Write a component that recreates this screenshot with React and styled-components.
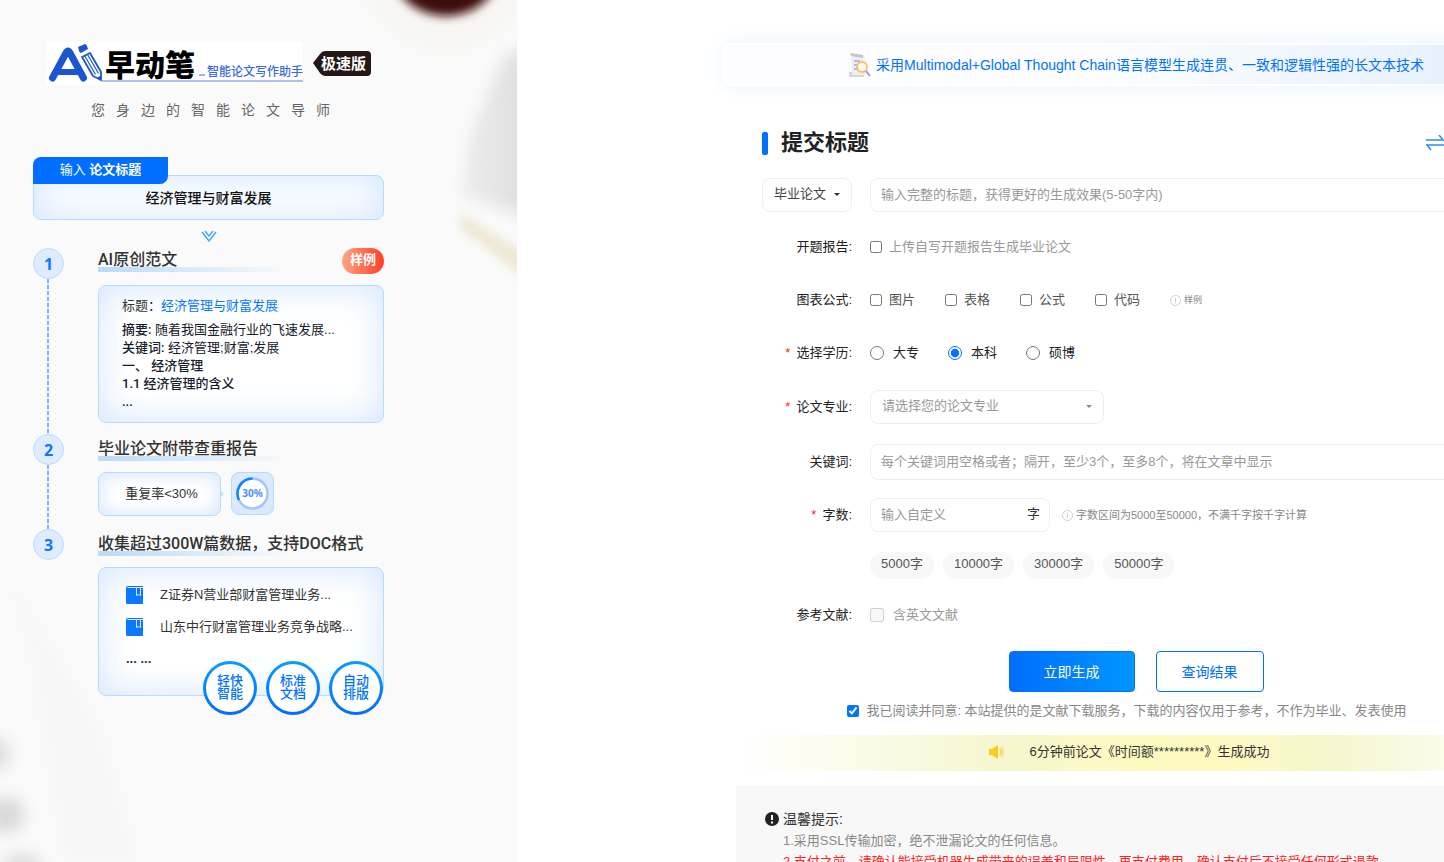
import { useState } from "react";
import styled, { createGlobalStyle, css } from "styled-components";

const GlobalStyle = createGlobalStyle`
    * {
        box-sizing: border-box;
    }

    body {
        margin: 0;
        background: #fff;
        color: #333;
        font-family: "Liberation Sans", "Noto Sans CJK SC", sans-serif;
        font-size: 13px;
        line-height: 18px;
    }

    button, input, select {
        font: inherit;
        color: inherit;
    }

    h1, h2, p, ul, ol {
        margin: 0;
        padding: 0;
    }

    ul, ol {
        list-style: none;
    }
`;

const Page = styled.div`
    display: flex;
    height: 100vh;
    overflow: hidden;
`;

const Aside = styled.aside`
    position: relative;
    flex: 0 1 517px;
    padding: 42px 133px 0 33px;
    background: #fafafa;
    overflow: hidden;
`;

const Backdrop = styled.svg`
    position: absolute;
    top: 0;
    left: 0;
`;

const AsideBody = styled.div`
    position: relative;
`;

const Brand = styled.div`
    display: flex;
    align-items: center;
    gap: 10px;
    padding-left: 13px;
`;

const Slogan = styled.p`
    margin: 15px 0 0 58px;
    font-size: 14px;
    line-height: 20px;
    letter-spacing: 11px;
    white-space: nowrap;
    color: #666;
`;

const panel = css`
    border: 1px solid #b3dcff;
    border-radius: 8px;
    background: #fff;
    box-shadow: inset 0 0 36px #d0e4ff;
`;

const TitleBox = styled.div`
    margin-top: 37px;

    .tag {
        position: relative;
        z-index: 1;
        width: 135px;
        height: 27px;
        line-height: 26px;
        border-radius: 8px 0 8px 0;
        background: #006eff;
        color: #fff;
        text-align: center;
    }

    .value {
        ${panel}
        margin-top: -9px;
        height: 45px;
        line-height: 44px;
        font-size: 14px;
        font-weight: 500;
        text-align: center;
        color: #111;
    }
`;

const Arrow = styled.svg`
    display: block;
    margin: 11px auto 6px;
`;

const Steps = styled.ol`
    display: flex;
    flex-direction: column;
`;

const Step = styled.li`
    display: grid;
    grid-template-columns: 31px 1fr;
    column-gap: 34px;
    padding-bottom: ${({ $gap }) => $gap || 0}px;
    position: relative;

    &:not(:last-child)::before {
        content: "";
        position: absolute;
        top: 31px;
        bottom: 0;
        left: 14px;
        width: 2px;
        background: repeating-linear-gradient(#7db5ff 0 4px, #dcebff 4px 6px);
    }
`;

const StepNumber = styled.span`
    width: 31px;
    height: 31px;
    line-height: 30px;
    border: 1px solid #b3dcff;
    border-radius: 50%;
    background: #dfecff;
    color: #0a78ff;
    font-family: "Noto Sans", sans-serif;
    font-size: 16px;
    font-weight: 700;
    text-align: center;
`;

const StepHead = styled.div`
    display: flex;
    justify-content: space-between;
    align-items: flex-start;
    padding-top: ${({ $top }) => $top || 0}px;

    h2 {
        flex: 1;
        height: 24px;
        padding-top: 1px;
        font-family: Roboto, "Noto Sans CJK SC", sans-serif;
        font-size: 16px;
        font-weight: 500;
        line-height: 22px;
        white-space: nowrap;
        background: linear-gradient(90deg, #b8dbf9, #fafafa) 0 100% / 194px 5px no-repeat;
    }
`;

const SampleButton = styled.button`
    width: 42px;
    height: 26px;
    padding: 0 0 3px;
    border: 0;
    border-radius: 13px;
    background: linear-gradient(90deg, #ffa584, #ff3d25);
    color: #fff;
    font-weight: 700;
    cursor: pointer;
`;

const Outline = styled.div`
    ${panel}
    height: 138px;
    margin-top: 11px;
    padding: 11px 23px;
    color: #16202c;

    p {
        white-space: nowrap;
    }

    p:first-child {
        margin-bottom: 6px;
        color: #333;
    }

    a {
        color: #0a78ff;
        text-decoration: none;
    }

    b {
        font-family: Roboto, "Noto Sans CJK SC", sans-serif;
        font-weight: 500;
    }
`;

const Rates = styled.div`
    display: flex;
    gap: 10px;
    margin-top: 11px;

    div {
        ${panel}
        width: 123px;
        height: 44px;
        line-height: 42px;
        text-align: center;
        box-shadow: inset 0 0 20px #d0e4ff;
    }

    .rate {
        position: relative;
        padding-left: 4px;
    }

    /* small pointer towards the ring */
    .rate::after {
        content: "";
        position: absolute;
        top: 18px;
        right: -4px;
        border: 3px solid transparent;
        border-left-color: #c5e2ff;
        border-right: 0;
    }

    .ring {
        width: 43px;
        height: 43px;
        background: #e3efff;
    }

    svg {
        display: block;
        margin: 4px;
    }
`;

const Papers = styled.div`
    ${panel}
    position: relative;
    height: 129px;
    margin-top: 11px;
    padding: 18px 27px;

    li {
        display: flex;
        align-items: center;
        gap: 17px;
        margin-bottom: 14px;
        white-space: nowrap;
    }
`;

const Badges = styled.ul`
    position: absolute;
    right: 0;
    bottom: -20px;
    display: flex;
    gap: 9px;

    && li {
        width: 54px;
        height: 54px;
        margin: 0;
        padding-bottom: 2px;
        justify-content: center;
        border: 3px solid transparent;
        border-radius: 50%;
        background: linear-gradient(#fff, #fff) padding-box, linear-gradient(#0a9bff, #006eff) border-box;
        color: #0072ff;
        font-weight: 500;
        line-height: 13px;
        white-space: pre;
    }
`;

const Main = styled.main`
    flex: 1 1 0;
    min-width: 0;
    padding: 43px 0 0 206px;
    overflow: hidden;
`;

const Content = styled.div`
    min-width: 826px;
`;

const Banner = styled.div`
    display: flex;
    justify-content: center;
    align-items: center;
    gap: 4px;
    height: 43px;
    border: 2px solid #fff;
    border-radius: 8px;
    background: linear-gradient(90deg, #fdfdff 45%, #e0eefd);
    box-shadow: 0 0 20px #e6f4ff;
    color: #0072ff;
    font-size: 14px;
    white-space: nowrap;
`;

const Form = styled.form`
    padding: 0 39px;
`;

const FormHead = styled.div`
    display: flex;
    align-items: center;
    gap: 13px;
    height: 34px;
    margin: 40px 0 18px;

    &::before {
        content: "";
        width: 6px;
        height: 23px;
        border-radius: 2px;
        background: #0072ff;
    }

    h1 {
        flex: 1;
        font-size: 22px;
        line-height: 32px;
        font-weight: 700;
        color: #222;
    }

    button {
        display: flex;
        margin-right: 66px;
        padding: 0;
        border: 0;
        background: none;
    }
`;

const Row = styled.div`
    display: grid;
    grid-template-columns: 90px 1fr;
    column-gap: 18px;
    align-items: center;
    height: ${({ $height }) => $height || 54}px;
    white-space: nowrap;
`;

const Label = styled.label`
    text-align: right;
    color: #222;

    i {
        margin-right: 6px;
        color: #f22;
        font-style: normal;
    }
`;

const Fields = styled.div`
    display: flex;
    align-items: center;
    gap: ${({ $gap }) => $gap || 0}px;
`;

const SelectWrap = styled.div`
    position: relative;
    width: ${({ $width }) => $width}px;

    &::after {
        content: "";
        position: absolute;
        top: 15px;
        right: 12px;
        border: 3px solid transparent;
        border-top-color: ${({ $muted }) => ($muted ? "#888" : "#333")};
        border-bottom: 0;
    }

    select {
        display: block;
        width: 100%;
        height: 34px;
        padding: 0 11px 3px;
        border: 1px solid #eee;
        border-radius: 8px;
        appearance: none;
        background: #fff;
        color: ${({ $muted }) => ($muted ? "#999" : "#444")};
    }
`;

const Input = styled.input`
    width: ${({ $width }) => ($width ? `${$width}px` : "100%")};
    height: ${({ $height }) => $height || 34}px;
    padding: 0 10px 2px;
    border: 1px solid #eee;
    border-radius: 8px;
    outline: none;

    &::placeholder {
        color: #999;
    }
`;

const Suffixed = styled.div`
    position: relative;

    span {
        position: absolute;
        top: 7px;
        right: 10px;
    }
`;

const Check = styled.label`
    display: flex;
    align-items: center;
    gap: ${({ $radio }) => ($radio ? 9 : 7)}px;
    color: ${({ $color }) => $color || "#555"};

    input {
        width: ${({ $radio }) => ($radio ? 14 : 12)}px;
        height: ${({ $radio }) => ($radio ? 14 : 12)}px;
        margin: 0;
        accent-color: #0075ff;
    }
`;

const Hint = styled.span`
    display: flex;
    align-items: center;
    gap: 3px;
    color: #888;
    font-size: ${({ $small }) => ($small ? 9 : 11)}px;
`;

const Chip = styled.button`
    height: 27px;
    padding: 0 11px 2px;
    border: 0;
    border-radius: 14px;
    background: #f8f8f8;
    color: #555;
    cursor: pointer;
`;

const Actions = styled.div`
    display: flex;
    justify-content: center;
    gap: 21px;
    margin-top: 19px;

    button {
        width: 108px;
        height: 41px;
        border: 1px solid #006eff;
        border-radius: 4px;
        background: #fff;
        color: #006eff;
        font-size: 14px;
        cursor: pointer;
    }

    .primary {
        width: 126px;
        background: linear-gradient(90deg, #006eff, #0096ff);
        color: #fff;
    }
`;

const Agreement = styled.div`
    display: flex;
    justify-content: center;
    margin: 10px 18px 0 0;
`;

const Notice = styled.div`
    display: flex;
    justify-content: center;
    align-items: center;
    gap: 26px;
    height: 36px;
    margin: 15px 13px 15px;
    padding: 0 14px 2px 0;
    background: linear-gradient(90deg, #fff, #f6f6cf 33%, #fdfac0 50%, #fdfac0 60%, #f6f6cf 75%, #fff);
`;

const Tips = styled.section`
    margin: 0 13px;
    padding: 22px 29px;
    background: #f8f8f8;
    color: #888;
    line-height: 21px;

    h2 {
        display: flex;
        align-items: center;
        gap: 4px;
        color: #333;
        font-size: 14px;
        font-weight: 400;
        line-height: 22px;
    }

    p {
        padding-left: 18px;
        white-space: nowrap;
    }

    .warn {
        color: #f22;
    }
`;

const Logo = () => (
    <svg width="257" height="43" viewBox="0 0 257 43">
        <rect width="257" height="43" fill="#fff" />
        <path d="M6.500 36 20 11Q22 7 24 11L37.500 36" fill="none" stroke="#1b55d0" strokeWidth="7" strokeLinecap="round" strokeLinejoin="round" />
        <path d="M14 27h17l2 6H11z" fill="#1b55d0" />
        <path d="m32 5 7-3q1 0 2 2l1 3-7 4q-1 0-2-2z" fill="#1b55d0" />
        <path d="m36 15 8-4 11 19 0 8-8-4z" fill="#fff" stroke="#1b55d0" strokeWidth="1.800" strokeLinejoin="round" />
        <path d="m38.500 13.500 11 19m-8-20 11 19" stroke="#1b55d0" strokeWidth="1.200" />
        <path d="m51 36 4-3v6z" fill="#1b55d0" />
        <path d="M55 39h202" stroke="#5c85e0" strokeWidth="1" />
        <text x="59" y="34" fontSize="30" fontWeight="900" fill="#000" fontFamily="Noto Sans CJK SC, sans-serif">早动笔</text>
        <path d="M153 33h6" stroke="#3b6be0" strokeWidth="1" />
        <text x="161" y="34" fontSize="12" fontWeight="500" fill="#3b6be0" fontFamily="Noto Sans CJK SC, sans-serif">智能论文写作助手</text>
    </svg>
);

const Edition = () => (
    <svg width="58" height="25" viewBox="0 0 58 25">
        <path d="M0 12 7 3Q9 0 12 0H54Q58 0 58 4V21Q58 25 54 25H12Q9 25 7 22Z" fill="#231815" />
        <text x="8" y="18" fontSize="15" fontWeight="700" fill="#fff" fontFamily="Noto Sans CJK SC, sans-serif">极速版</text>
    </svg>
);

const Photo = () => (
    <Backdrop width="517" height="862" viewBox="0 0 517 862" aria-hidden="true">
        <defs>
            <linearGradient id="cloth" x1="0" y1="0" x2="1" y2="0">
                <stop offset="0" stopColor="#ececec" />
                <stop offset="1" stopColor="#dcdcdc" />
            </linearGradient>
            <filter id="wide" x="-50%" y="-50%" width="200%" height="200%">
                <feGaussianBlur stdDeviation="8" />
            </filter>
            <filter id="soft" x="-50%" y="-50%" width="200%" height="200%">
                <feGaussianBlur stdDeviation="5" />
            </filter>
        </defs>
        <ellipse cx="446" cy="-40" rx="88" ry="92" fill="#f7f6f2" filter="url(#wide)" />
        <ellipse cx="446" cy="-32" rx="54" ry="48" fill="#3c0f10" filter="url(#soft)" />
        <path d="M540 45 504 55 490 90 470 135 462 195 540 222Z" fill="url(#cloth)" filter="url(#wide)" />
        <path d="M459 212 540 262V290L462 230Z" fill="#efe8d6" filter="url(#soft)" />
        <path d="M0 560 30 660 62 862H140L100 720Z" fill="#f7f7f7" filter="url(#wide)" />
        <ellipse cx="-4" cy="754" rx="13" ry="17" fill="#dcdcdc" filter="url(#wide)" />
        <ellipse cx="6" cy="815" rx="18" ry="18" fill="#d8d8d8" filter="url(#wide)" />
        <ellipse cx="22" cy="868" rx="20" ry="14" fill="#dcdcdc" filter="url(#wide)" />
    </Backdrop>
);

const Info = () => (
    <svg width="11" height="11" viewBox="0 0 12 12" fill="none" stroke="#ccc">
        <circle cx="6" cy="6" r="5.500" />
        <path d="M6 3v6" />
    </svg>
);

const Book = () => (
    <svg width="17" height="18" viewBox="0 0 17 18">
        <path d="M2 0h15v18H1q-1 0-1-1V2q0-2 2-2z" fill="#0a78ff" />
        <path d="M1.500 1.500H17M10.500 1.500V9.500L12.500 8.500L14.500 9.500V1.500" fill="none" stroke="#d9eaff" strokeWidth="1" />
    </svg>
);

const extras = ["图片", "表格", "公式", "代码"];
const degrees = ["大专", "本科", "硕博"];
const counts = ["5000", "10000", "30000", "50000"];

const App = () => {
    const [degree, setDegree] = useState("本科");
    const [count, setCount] = useState("");
    const [agreed, setAgreed] = useState(true);

    return (
        <Page>
            <GlobalStyle />
            <Aside>
                <Photo />
                <AsideBody>
                    <Brand>
                        <Logo />
                        <Edition />
                    </Brand>
                    <Slogan>您身边的智能论文导师</Slogan>
                    <TitleBox>
                        <div className="tag">输入 <b>论文标题</b></div>
                        <div className="value">经济管理与财富发展</div>
                    </TitleBox>
                    <Arrow width="16" height="11" viewBox="0 0 16 11" fill="none" stroke="#39a5ff" strokeWidth="1.400">
                        <path d="m1 1 7 9 7-9M4 0l4 5 4-5" />
                    </Arrow>
                    <Steps>
                        <Step $gap={11}>
                            <StepNumber>1</StepNumber>
                            <div>
                                <StepHead>
                                    <h2>AI原创范文</h2>
                                    <SampleButton type="button">样例</SampleButton>
                                </StepHead>
                                <Outline>
                                    <p>标题：<a href="#sample">经济管理与财富发展</a></p>
                                    <p><b>摘要:</b> 随着我国金融行业的飞速发展...</p>
                                    <p><b>关键词:</b> 经济管理;财富;发展</p>
                                    <p><b>一、 经济管理</b></p>
                                    <p><b>1.1 经济管理的含义</b></p>
                                    <p><b>...</b></p>
                                </Outline>
                            </div>
                        </Step>
                        <Step $gap={13}>
                            <StepNumber>2</StepNumber>
                            <div>
                                <StepHead $top={3}><h2>毕业论文附带查重报告</h2></StepHead>
                                <Rates>
                                    <div className="rate">重复率&lt;30%</div>
                                    <div className="ring">
                                        <svg width="33" height="33" viewBox="0 0 33 33" fill="none">
                                            <circle cx="16.500" cy="16.500" r="15" fill="#fff" stroke="#a3c2ff" strokeWidth="2.500" />
                                            <path d="M3 23A15 15 0 0 1 16.500 1.500" stroke="#0a84ff" strokeWidth="2.500" />
                                            <text x="16.500" y="20" textAnchor="middle" fontFamily="Noto Sans, sans-serif" fontSize="10" fontWeight="700" fill="#4d8dff">30%</text>
                                        </svg>
                                    </div>
                                </Rates>
                            </div>
                        </Step>
                        <Step>
                            <StepNumber>3</StepNumber>
                            <div>
                                <StepHead $top={3}><h2>收集超过300W篇数据，支持DOC格式</h2></StepHead>
                                <Papers>
                                    <ul>
                                        <li><Book />Z证券N营业部财富管理业务...</li>
                                        <li><Book />山东中行财富管理业务竞争战略...</li>
                                    </ul>
                                    <b>... ...</b>
                                    <Badges>
                                        <li>{"轻快\n智能"}</li>
                                        <li>{"标准\n文档"}</li>
                                        <li>{"自动\n排版"}</li>
                                    </Badges>
                                </Papers>
                            </div>
                        </Step>
                    </Steps>
                </AsideBody>
            </Aside>

            <Main>
                <Content>
                    <Banner>
                        <svg width="24" height="26" viewBox="0 0 24 26" fill="none">
                            <path d="M3 2 14 3 17 5 18 23 2 24 4 20Z" fill="#eceef4" />
                            <path d="M2 1 15 3v3L3 4Z" fill="#c3c6ce" />
                            <path d="M1 20h3v3h12v2H1z" fill="#d3d6df" />
                            <path d="M6 9h6M6 13h4M6 17h5" stroke="#a3a9e2" strokeWidth="1.500" />
                            <circle cx="14" cy="15" r="5" fill="#fdfaf2" stroke="#f7bf6c" strokeWidth="2" />
                            <path d="m18 19 4 5" stroke="#929cdc" strokeWidth="2" />
                        </svg>
                        采用Multimodal+Global Thought Chain语言模型生成连贯、一致和逻辑性强的长文本技术
                    </Banner>
                    <Form onSubmit={(e) => e.preventDefault()}>
                        <FormHead>
                            <h1>提交标题</h1>
                            <button type="button" aria-label="切换">
                                <svg width="18" height="16" viewBox="0 0 18 16" fill="none" stroke="#2f88ff" strokeWidth="1.500">
                                    <path d="M0 5h17l-4-5M18 10H1l4 5" />
                                </svg>
                            </button>
                        </FormHead>
                        <Row $height={34}>
                            <SelectWrap $width={90}>
                                <select aria-label="论文类型"><option>毕业论文</option></select>
                            </SelectWrap>
                            <Input aria-label="标题" placeholder="输入完整的标题，获得更好的生成效果(5-50字内)" />
                        </Row>
                        <Row $height={70}>
                            <Label htmlFor="report">开题报告:</Label>
                            <Check $color="#999"><input id="report" type="checkbox" />上传自写开题报告生成毕业论文</Check>
                        </Row>
                        <Row $height={36}>
                            <Label as="span">图表公式:</Label>
                            <Fields $gap={30}>
                                {extras.map((item) => (
                                    <Check key={item}><input type="checkbox" />{item}</Check>
                                ))}
                                <Hint $small><Info />样例</Hint>
                            </Fields>
                        </Row>
                        <Row $height={70}>
                            <Label as="span"><i>*</i>选择学历:</Label>
                            <Fields $gap={29}>
                                {degrees.map((item) => (
                                    <Check key={item} $radio $color="#222">
                                        <input type="radio" name="degree" checked={degree === item} onChange={() => setDegree(item)} />
                                        {item}
                                    </Check>
                                ))}
                            </Fields>
                        </Row>
                        <Row $height={38}>
                            <Label htmlFor="major"><i>*</i>论文专业:</Label>
                            <SelectWrap $width={234} $muted>
                                <select id="major"><option>请选择您的论文专业</option></select>
                            </SelectWrap>
                        </Row>
                        <Row $height={72}>
                            <Label htmlFor="keywords">关键词:</Label>
                            <Input id="keywords" $height={36} placeholder="每个关键词用空格或者；隔开，至少3个，至多8个，将在文章中显示" />
                        </Row>
                        <Row $height={34}>
                            <Label htmlFor="count"><i>*</i>字数:</Label>
                            <Fields $gap={12}>
                                <Suffixed>
                                    <Input id="count" $width={180} placeholder="输入自定义" value={count} onChange={(e) => setCount(e.target.value)} />
                                    <span>字</span>
                                </Suffixed>
                                <Hint><Info />字数区间为5000至50000，不满千字按千字计算</Hint>
                            </Fields>
                        </Row>
                        <Row $height={66}>
                            <span />
                            <Fields $gap={9}>
                                {counts.map((item) => (
                                    <Chip key={item} type="button" onClick={() => setCount(item)}>{item}字</Chip>
                                ))}
                            </Fields>
                        </Row>
                        <Row $height={34}>
                            <Label htmlFor="english">参考文献:</Label>
                            <Check $radio $color="#999"><input id="english" type="checkbox" disabled />含英文文献</Check>
                        </Row>
                        <Actions>
                            <button type="submit" className="primary">立即生成</button>
                            <button type="button">查询结果</button>
                        </Actions>
                        <Agreement>
                            <Check $color="#888">
                                <input type="checkbox" checked={agreed} onChange={() => setAgreed(!agreed)} />
                                我已阅读并同意: 本站提供的是文献下载服务，下载的内容仅用于参考，不作为毕业、发表使用
                            </Check>
                        </Agreement>
                    </Form>
                    <Notice>
                        <svg width="15" height="14" viewBox="0 0 15 14" fill="#fccb1a">
                            <path d="M0 4h3l6-4v14l-6-4H0z" />
                            <path d="M11 4q2 3 0 6M12 2q4 5 0 10" fill="none" stroke="#fccb1a" />
                        </svg>
                        6分钟前论文《时间额**********》生成成功
                    </Notice>
                    <Tips>
                        <h2>
                            <svg width="14" height="14" viewBox="0 0 14 14">
                                <circle cx="7" cy="7" r="7" fill="#222" />
                                <path d="M7 3v5M7 9.500v2" stroke="#fff" strokeWidth="2" />
                            </svg>
                            温馨提示:
                        </h2>
                        <p>1.采用SSL传输加密，绝不泄漏论文的任何信息。</p>
                        <p className="warn">2.支付之前，请确认能接受机器生成带来的误差和局限性，再支付费用，确认支付后不接受任何形式退款</p>
                    </Tips>
                </Content>
            </Main>
        </Page>
    );
};

export default App;
